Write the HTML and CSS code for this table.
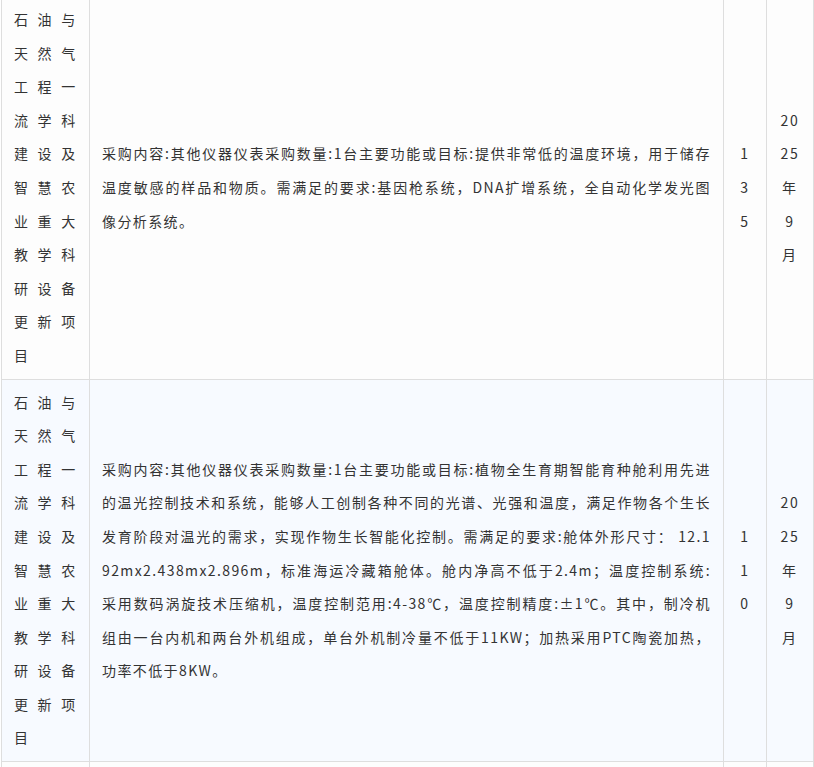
FILE: index.html
```html
<!DOCTYPE html>
<html lang="zh-CN">
<head>
<meta charset="utf-8">
<title>采购项目</title>
<link rel="stylesheet" href="styles.css">
</head>
<body>
<table class="plan">
  <colgroup>
    <col class="c-name">
    <col class="c-desc">
    <col class="c-qty">
    <col class="c-date">
  </colgroup>
  <tbody>
    <tr class="row-odd">
      <td class="name">石油与天然气工程一流学科建设及智慧农业重大教学科研设备更新项目</td>
      <td class="desc"><span class="ln">采购内容:其他仪器仪表采购数量:1台主要功能或目标:提供非常低的温度环境，用于储存</span><span class="ln">温度敏感的样品和物质。需满足的要求:基因枪系统，DNA扩增系统，全自动化学发光图</span><span class="ln last">像分析系统。</span></td>
      <td class="num">135</td>
      <td class="num">2025年9月</td>
    </tr>
    <tr class="row-even">
      <td class="name">石油与天然气工程一流学科建设及智慧农业重大教学科研设备更新项目</td>
      <td class="desc"><span class="ln">采购内容:其他仪器仪表采购数量:1台主要功能或目标:植物全生育期智能育种舱利用先进</span><span class="ln">的温光控制技术和系统，能够人工创制各种不同的光谱、光强和温度，满足作物各个生长</span><span class="ln">发育阶段对温光的需求，实现作物生长智能化控制。需满足的要求:舱体外形尺寸： 12.1</span><span class="ln">92mx2.438mx2.896m，标准海运冷藏箱舱体。舱内净高不低于2.4m；温度控制系统:</span><span class="ln">采用数码涡旋技术压缩机，温度控制范用:4-38℃，温度控制精度:±1℃。其中，制冷机</span><span class="ln">组由一台内机和两台外机组成，单台外机制冷量不低于11KW；加热采用PTC陶瓷加热，</span><span class="ln last">功率不低于8KW。</span></td>
      <td class="num">110</td>
      <td class="num">2025年9月</td>
    </tr>
    <tr class="row-odd">
      <td class="name">石油与天然气工程一流学科建设及智慧农业重大教学科研设备更新项目</td>
      <td class="desc"></td>
      <td class="num"></td>
      <td class="num"></td>
    </tr>
  </tbody>
</table>
</body>
</html>
```

FILE: styles.css
```css
html, body {
  margin: 0;
  padding: 0;
  background: #ffffff;
}

body {
  font-family: "Noto Sans CJK SC", "Noto Sans", sans-serif;
  font-size: 14px;
  color: #333333;
}

.plan {
  table-layout: fixed;
  border-collapse: separate;
  border-spacing: 0;
  width: 813px;
  margin: -4px 0 0 1px;
  border-left: 1px solid #dedede;
  border-top: 1px solid #dedede;
}

.c-name { width: 88px; }
.c-desc { width: 634px; }
.c-qty { width: 43px; }
.c-date { width: 47px; }

.plan td {
  box-sizing: border-box;
  border-right: 1px solid #dedede;
  border-bottom: 1px solid #dedede;
  padding: 6px 12px;
  vertical-align: middle;
  line-height: 2.4;
  letter-spacing: 1.8px;
  word-break: break-all;
  text-align: justify;
}

.plan td.desc {
  letter-spacing: 1.4px;
}

.ln {
  display: block;
  white-space: nowrap;
  text-align: justify;
  text-align-last: justify;
}

.ln.last {
  text-align-last: auto;
}

.plan td.num {
  text-align: center;
}

.row-odd td {
  background: #fdfdfd;
}

.row-even td {
  background: #f7faff;
}
```
